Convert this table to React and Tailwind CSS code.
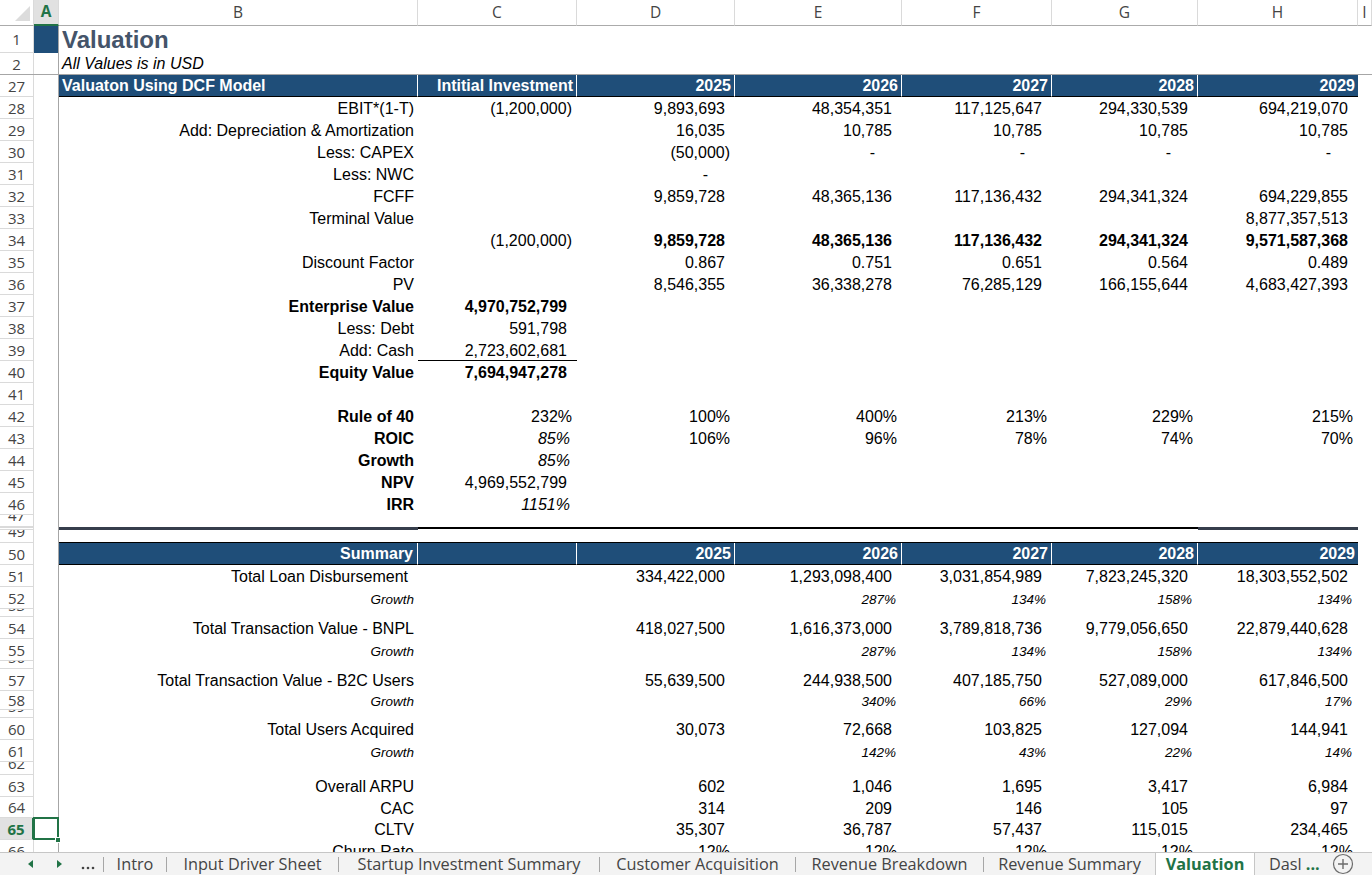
import clsx from 'clsx'

const GRID = 'grid grid-rows-1 grid-cols-[34px_25px_359px_159px_158px_167px_150px_146px_160px_1fr]'
const UI = "font-['Open_Sans',sans-serif]"

const padFor = (t) => {
  if (t === '-') return 'pr-[27px]'
  if (t.endsWith(')')) return 'pr-[5px]'
  if (t.endsWith('%')) return 'pr-[5px]'
  return 'pr-[10px]'
}

const B = (t) => ({ t, b: true })
const I = (t) => ({ t, i: true })
const G = (t) => ({ t, g: true })

const dcf = [
  { n: 28, b: 'EBIT*(1-T)', v: ['(1,200,000)', '9,893,693', '48,354,351', '117,125,647', '294,330,539', '694,219,070'] },
  { n: 29, b: 'Add: Depreciation & Amortization', v: ['', '16,035', '10,785', '10,785', '10,785', '10,785'] },
  { n: 30, b: 'Less: CAPEX', v: ['', '(50,000)', '-', '-', '-', '-'] },
  { n: 31, b: 'Less: NWC', v: ['', '-'] },
  { n: 32, b: 'FCFF', v: ['', '9,859,728', '48,365,136', '117,136,432', '294,341,324', '694,229,855'] },
  { n: 33, b: 'Terminal Value', v: ['', '', '', '', '', '8,877,357,513'] },
  { n: 34, b: '', v: ['(1,200,000)', B('9,859,728'), B('48,365,136'), B('117,136,432'), B('294,341,324'), B('9,571,587,368')] },
  { n: 35, b: 'Discount Factor', v: ['', '0.867', '0.751', '0.651', '0.564', '0.489'] },
  { n: 36, b: 'PV', v: ['', '8,546,355', '36,338,278', '76,285,129', '166,155,644', '4,683,427,393'] },
  { n: 37, b: 'Enterprise Value', bb: true, v: [B('4,970,752,799')] },
  { n: 38, b: 'Less: Debt', v: ['591,798'] },
  { n: 39, b: 'Add: Cash', v: [{ t: '2,723,602,681', u: true }] },
  { n: 40, b: 'Equity Value', bb: true, v: [B('7,694,947,278')] },
  { n: 41, b: '', v: [] },
  { n: 42, b: 'Rule of 40', bb: true, v: ['232%', '100%', '400%', '213%', '229%', '215%'] },
  { n: 43, b: 'ROIC', bb: true, v: [I('85%'), '106%', '96%', '78%', '74%', '70%'] },
  { n: 44, b: 'Growth', bb: true, v: [I('85%')] },
  { n: 45, b: 'NPV', bb: true, v: ['4,969,552,799'] },
  { n: 46, b: 'IRR', bb: true, v: [I('1151%')] },
]

const summary = [
  { n: 51, b: 'Total Loan Disbursement', bp: true, v: ['', '334,422,000', '1,293,098,400', '3,031,854,989', '7,823,245,320', '18,303,552,502'] },
  { n: 52, b: 'Growth', g: true, v: ['', '', G('287%'), G('134%'), G('158%'), G('134%')] },
  { n: 53, h: 'h-[8px]', short: true },
  { n: 54, b: 'Total Transaction Value - BNPL', v: ['', '418,027,500', '1,616,373,000', '3,789,818,736', '9,779,056,650', '22,879,440,628'] },
  { n: 55, b: 'Growth', g: true, v: ['', '', G('287%'), G('134%'), G('158%'), G('134%')] },
  { n: 56, h: 'h-[8px]', short: true },
  { n: 57, b: 'Total Transaction Value - B2C Users', v: ['', '55,639,500', '244,938,500', '407,185,750', '527,089,000', '617,846,500'] },
  { n: 58, h: 'h-[19px]', b: 'Growth', g: true, v: ['', '', G('340%'), G('66%'), G('29%'), G('17%')] },
  { n: 59, h: 'h-[8px]', short: true },
  { n: 60, b: 'Total Users Acquired', v: ['', '30,073', '72,668', '103,825', '127,094', '144,941'] },
  { n: 61, b: 'Growth', g: true, v: ['', '', G('142%'), G('43%'), G('22%'), G('14%')] },
  { n: 62, h: 'h-[13px]', short: true },
  { n: 63, b: 'Overall ARPU', v: ['', '602', '1,046', '1,695', '3,417', '6,984'] },
  { n: 64, h: 'h-[21px]', b: 'CAC', v: ['', '314', '209', '146', '105', '97'] },
  { n: 65, b: 'CLTV', sel: true, v: ['', '35,307', '36,787', '57,437', '115,015', '234,465'] },
  { n: 66, b: 'Churn Rate', v: ['', '12%', '12%', '12%', '12%', '12%'] },
]

function RowNum({ n, short, sel }) {
  return (
    <div className={clsx(
      'flex justify-center overflow-hidden border-r border-b border-[#dadada] text-[15px]', UI,
      short ? 'items-end' : 'items-center',
      sel ? 'bg-[#e1e1e1] text-[#217346] font-bold border-r-2 border-r-[#217346]' : 'text-[#444]'
    )}>
      <span className="leading-[22px]">{n}</span>
    </div>
  )
}

function Val({ v }) {
  if (v == null || v === '') return <div />
  const o = typeof v === 'string' ? { t: v } : v
  return (
    <div className={clsx(
      'flex items-center justify-end whitespace-nowrap',
      o.g ? 'italic text-[13.5px] pr-[6px] pt-[4px]' : o.i ? 'italic pr-[7px] pt-[2px]' : clsx(padFor(o.t), 'pt-[2px]'),
      o.b && 'font-bold',
      o.u && 'border-b border-black'
    )}>
      {o.t}
    </div>
  )
}

function ColA({ sel }) {
  if (!sel) return <div className="border-r border-[#a6a6a6]" />
  return (
    <div className="relative border-r border-[#a6a6a6]">
      <div className="absolute -left-[1px] -top-[1px] right-[-1px] bottom-0 border-2 border-[#217346]" />
      <div className="absolute -right-[3px] -bottom-[3px] w-[6px] h-[6px] bg-[#217346] border border-white" />
    </div>
  )
}

function Row({ n, h = 'h-[22px]', short, b, bb, bp, g, v = [], sel }) {
  return (
    <div className={clsx(GRID, h)}>
      <RowNum n={n} short={short} sel={sel} />
      <ColA sel={sel} />
      <div className={clsx(
        'flex items-center justify-end whitespace-nowrap',
        bp ? 'pr-[10px]' : 'pr-[4px]',
        bb && 'font-bold',
        g ? 'italic text-[13.5px] pt-[4px]' : 'pt-[2px]'
      )}>
        {b}
      </div>
      {[0, 1, 2, 3, 4, 5].map(i => <Val key={i} v={v[i]} />)}
      <div />
    </div>
  )
}

function HeadRow({ n, left, mid, years, right }) {
  return (
    <div className={clsx(GRID, 'h-[22px]')}>
      <RowNum n={n} />
      <ColA />
      <div className={clsx(
        'flex items-center pt-[1px] bg-[#1f4e79] text-white font-bold border-r border-white border-b border-b-black whitespace-nowrap',
        right ? 'justify-end pr-[4px]' : 'pl-[3px]'
      )}>
        {left}
      </div>
      <div className="flex items-center justify-end pt-[1px] pr-[3px] bg-[#1f4e79] text-white font-bold border-r border-white border-b border-b-black whitespace-nowrap">
        {mid}
      </div>
      {years.map((y, i) => (
        <div key={y} className={clsx(
          'flex items-center justify-end pt-[1px] pr-[3px] bg-[#1f4e79] text-white font-bold border-b border-b-black',
          i < 4 && 'border-r border-white'
        )}>
          {y}
        </div>
      ))}
      <div />
    </div>
  )
}

const YEARS = ['2025', '2026', '2027', '2028', '2029']
const LETTERS = ['B', 'C', 'D', 'E', 'F', 'G', 'H', 'I']

function ColumnHeader() {
  return (
    <div className={clsx(GRID, 'h-[26px] text-[15.5px] text-[#444]', UI)}>
      <div className="flex items-end justify-end border-r border-[#dadada] border-b border-b-[#ababab] pr-[2px] pb-[3px]">
        <svg width="18" height="18" viewBox="0 0 18 18">
          <polygon points="17,2 17,17 2,17" fill="#dcdcdc" />
        </svg>
      </div>
      <div className="flex items-center justify-center bg-[#e1e1e1] text-[#217346] font-bold border-r border-[#dadada] border-b-2 border-b-[#217346]">
        A
      </div>
      {LETTERS.map(l => (
        <div key={l} className="flex items-center justify-center border-r border-[#dadada] border-b border-b-[#ababab] overflow-hidden">
          {l}
        </div>
      ))}
    </div>
  )
}

function Tab({ w, children, active }) {
  if (active) {
    return (
      <div className={clsx(w, 'shrink-0 flex items-center justify-center bg-white border-l border-r border-[#c6c6c6] text-[#217346] font-bold')}>
        {children}
      </div>
    )
  }
  return (
    <div className={clsx(w, 'shrink-0 flex items-center')}>
      <span className="w-px h-[15px] bg-[#a6a6a6]" />
      <span className="flex-1 text-center whitespace-nowrap">{children}</span>
    </div>
  )
}

function TabBar() {
  return (
    <div className={clsx('h-[23px] shrink-0 flex bg-[#f3f3f3] border-t border-[#c6c6c6] text-[16.3px] text-[#444] overflow-hidden', UI)}>
      <div className="w-[103px] shrink-0 flex items-center">
        <svg width="103" height="22" viewBox="0 0 103 22">
          <polygon points="33,7 33,15 28,11" fill="#217346" />
          <polygon points="57,7 57,15 62,11" fill="#217346" />
          <circle cx="83" cy="15" r="1.3" fill="#444" />
          <circle cx="88" cy="15" r="1.3" fill="#444" />
          <circle cx="93" cy="15" r="1.3" fill="#444" />
        </svg>
      </div>
      <Tab w="w-[63px]">Intro</Tab>
      <Tab w="w-[172px]">Input Driver Sheet</Tab>
      <Tab w="w-[261px]">Startup Investment Summary</Tab>
      <Tab w="w-[196px]">Customer Acquisition</Tab>
      <Tab w="w-[188px]">Revenue Breakdown</Tab>
      <Tab w="w-[172px]">Revenue Summary</Tab>
      <Tab w="w-[100px]" active>Valuation</Tab>
      <div className="w-[75px] shrink-0 flex items-center pl-[14px] whitespace-nowrap">
        Dasl <span className="ml-[4px] text-[#217346] font-bold">...</span>
      </div>
      <div className="flex items-center pl-[2px]">
        <svg width="22" height="22" viewBox="0 0 22 22">
          <circle cx="11" cy="11" r="9.5" fill="none" stroke="#6b6b6b" strokeWidth="1.2" />
          <path d="M11 6v10M6 11h10" stroke="#6b6b6b" strokeWidth="1.4" />
        </svg>
      </div>
    </div>
  )
}

export default function App() {
  return (
    <div className="w-[1372px] h-[875px] flex flex-col bg-white overflow-hidden font-['Liberation_Sans',Arial,sans-serif] text-[16px] text-black">
      <div className="flex-1 overflow-hidden">
        <ColumnHeader />

        <div className={clsx(GRID, 'h-[27px]')}>
          <RowNum n={1} />
          <div className="bg-[#1f4e79] border-r border-[#a6a6a6]" />
          <div className="flex items-center pl-[3px] text-[24px] font-bold text-[#44546a] whitespace-nowrap">Valuation</div>
        </div>
        <div className={clsx(GRID, 'h-[22px] border-b border-[#a6a6a6]')}>
          <div className={clsx('flex items-center justify-center border-r border-[#dadada] text-[15px] text-[#444]', UI)}>
            <span className="leading-[22px]">2</span>
          </div>
          <div className="border-r border-[#a6a6a6]" />
          <div className="flex items-center pl-[3px] italic whitespace-nowrap">All Values is in USD</div>
        </div>

        <HeadRow n={27} left="Valuaton Using DCF Model" mid="Intitial Investment" years={YEARS} />
        {dcf.map(r => <Row key={r.n} {...r} />)}

        <Row n={47} h="h-[12px]" short />
        <div className={clsx(GRID, 'h-[3px]')}>
          <div className="border-r border-[#dadada] border-t border-b" />
          <div className="border-r border-[#a6a6a6]" />
          <div className="bg-[#363e4c]" />
          <div className="border-t-2 border-black" />
          <div className="border-t-2 border-black" />
          <div className="border-t-2 border-black" />
          <div className="border-t-2 border-black" />
          <div className="border-t-2 border-black" />
          <div className="bg-[#363e4c]" />
        </div>
        <div className={clsx(GRID, 'h-[13px]')}>
          <RowNum n={49} short />
          <div className="border-r border-[#a6a6a6]" />
          {[0, 1, 2, 3, 4, 5, 6].map(i => <div key={i} className="border-b border-black" />)}
        </div>

        <HeadRow n={50} left="Summary" right mid="" years={YEARS} />
        {summary.map(r => <Row key={r.n} {...r} />)}
      </div>
      <TabBar />
    </div>
  )
}
